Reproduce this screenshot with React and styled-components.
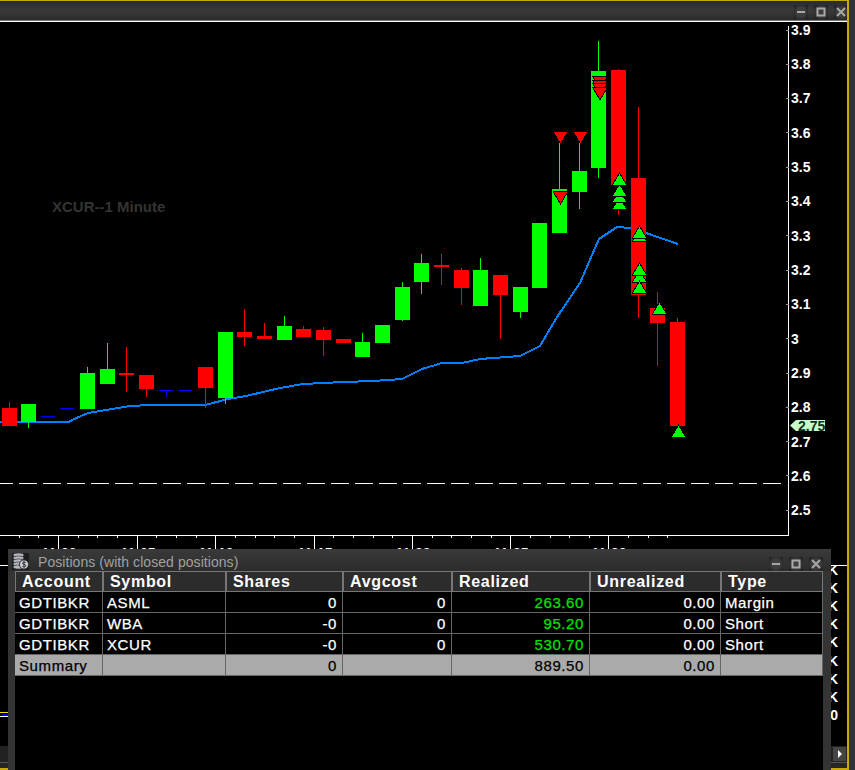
import React from "react";
import styled, { createGlobalStyle } from "styled-components";

// [left, bodyTop, bodyBottom, wickTop, wickBottom, colour]
const R = "#ff0000";
const G = "#00ff00";
const B = "#0000ff";
const candles = [
  [2, 408, 426, 402, 426, R],
  [21, 404, 422, 404, 428, G],
  [41, 416, 417, 416, 417, B],
  [60, 408, 409, 408, 409, B],
  [80, 373, 409, 367, 409, G],
  [100, 369, 384, 343, 384, G],
  [119, 373, 375, 347, 392, R],
  [139, 375, 389, 375, 397, R],
  [159, 390, 391, 390, 397, B],
  [178, 390, 391, 390, 391, B],
  [198, 367, 388, 367, 408, R],
  [218, 332, 398, 332, 404, G],
  [237, 332, 337, 309, 346, R],
  [257, 336, 339, 323, 339, R],
  [277, 326, 340, 316, 340, G],
  [296, 329, 337, 326, 337, R],
  [316, 330, 340, 327, 356, R],
  [336, 339, 343, 339, 343, R],
  [355, 342, 357, 333, 357, G],
  [375, 325, 343, 325, 343, G],
  [395, 287, 320, 282, 321, G],
  [414, 263, 282, 254, 294, G],
  [434, 265, 267, 254, 285, R],
  [454, 270, 288, 268, 305, R],
  [473, 270, 306, 258, 306, G],
  [493, 275, 295, 275, 339, R],
  [513, 287, 312, 287, 318, G],
  [532, 223, 288, 223, 288, G],
  [552, 189, 233, 142, 233, G],
  [572, 171, 192, 143, 209, G],
  [591, 71, 168, 41, 178, G],
  [611, 70, 185, 69, 215, R],
  [631, 178, 295, 107, 318, R],
  [650, 308, 323, 292, 366, R],
  [670, 322, 426, 318, 426, R],
];

const ema =
  "0,422 69,422 72,420 88,413 127,406.5 147,405 205,405 228,399 246,396 280,388 303,384 343,382 373,381 402,379 422,369 442,363 462,363 480,359 520,356 540,346 557,317 580,283 595,248 599,239 617,227 630,228 646,233 678,244";

// [centre x, top y]
const downMarks = [
  [560.5, 132], [580.5, 132], [560.5, 192],
  [600, 77], [600, 81], [600, 84], [600, 88],
];
const upMarks = [
  [619.5, 198], [619.5, 191], [619.5, 185], [619.5, 174],
  [639.5, 230], [639.5, 227],
  [639.5, 271], [639.5, 264], [639.5, 282],
  [659.5, 303],
  [678.5, 426],
];

const prices = ["3.9", "3.8", "3.7", "3.6", "3.5", "3.4", "3.3", "3.2", "3.1", "3", "2.9", "2.8", "2.7", "2.6", "2.5"];
const times = [["11:00", 0], ["11:05", 4], ["11:10", 8], ["11:15", 13], ["11:20", 18], ["11:25", 23], ["11:30", 28]];
const volumes = ["80K", "70K", "60K", "50K", "40K", "30K", "20K", "10K", "0"];

const tickX = (k) => Math.floor(58.5 + 19.66 * k);

const columns = [88, 123, 117, 109, 138, 131, 102];
const heads = ["Account", "Symbol", "Shares", "Avgcost", "Realized", "Unrealized", "Type"];
const rows = [
  ["GDTIBKR", "ASML", "0", "0", "263.60", "0.00", "Margin"],
  ["GDTIBKR", "WBA", "-0", "0", "95.20", "0.00", "Short"],
  ["GDTIBKR", "XCUR", "-0", "0", "530.70", "0.00", "Short"],
];
const summary = ["Summary", "", "0", "", "889.50", "0.00", ""];

function WindowButtons() {
  return (
    <>
      <WinButton>
        <svg width="14" height="14" viewBox="0 0 14 14">
          <rect x="3" y="6" width="8" height="2" fill="#a8a8a8" />
        </svg>
      </WinButton>
      <WinButton>
        <svg width="14" height="14" viewBox="0 0 14 14">
          <rect x="3.5" y="3.5" width="7" height="7" fill="none" stroke="#a8a8a8" strokeWidth="2" />
        </svg>
      </WinButton>
      <WinButton>
        <svg width="14" height="14" viewBox="0 0 14 14">
          <path d="M3 3l8 8M11 3l-8 8" stroke="#a8a8a8" strokeWidth="2" />
        </svg>
      </WinButton>
    </>
  );
}

function CoinsIcon() {
  return (
    <svg width="17" height="17" viewBox="0 0 17 17">
      <rect width="17" height="17" fill="#1c1c1c" />
      {[2, 5, 8, 11, 14].map((y) => (
        <ellipse key={y} cx="6.5" cy={y} rx="5.5" ry="2" fill="#b4b8c0" stroke="#3a3a3a" strokeWidth="0.7" />
      ))}
      <circle cx="12" cy="11.5" r="4.6" fill="#c8ccd2" stroke="#2a2a2a" />
      <path d="M13.6 9.6c-1-.8-3-.6-3 .7 0 1.5 3.2.8 3.2 2.4 0 1.2-2.2 1.4-3.4.6M12 8.2v6.6" fill="none" stroke="#222" strokeWidth="0.9" />
    </svg>
  );
}

// the black outline sits outside the fill, it only shows where marks overlap a candle
function Triangle({ cx, top, down }) {
  const a = down ? top : top + 11;
  const b = down ? top + 11 : top;
  return (
    <polygon
      points={`${cx - 6.5},${a} ${cx + 6.5},${a} ${cx},${b}`}
      fill={down ? R : G}
      stroke="#000"
      strokeWidth="2"
      paintOrder="stroke"
      shapeRendering="crispEdges"
    />
  );
}

function Chart() {
  return (
    <ChartSvg viewBox="0 21 847 725" width="847" height="725">
      <rect x="0" y="21" width="847" height="1" fill="#fff" />
      <rect x="0" y="565" width="847" height="1" fill="#fff" />
      <rect x="0" y="712" width="8" height="1" fill="#f0e000" />
      <rect x="2" y="714" width="6" height="2" fill="#0000ff" />
      <rect x="0" y="716" width="8" height="1" fill="#fff" />

      <WatermarkText x="52" y="212">XCUR--1 Minute</WatermarkText>

      <line x1="-5" y1="483.5" x2="782" y2="483.5" stroke="#fff" strokeDasharray="18 6" />

      <polyline points={ema} fill="none" stroke="#0080ff" strokeWidth="2" shapeRendering="crispEdges" />

      <g shapeRendering="crispEdges">
        {candles.map(([left, top, bottom, wickTop, wickBottom, colour]) => (
          <g key={left} fill={colour}>
            <rect x={left + 7} y={wickTop} width="1" height={wickBottom - wickTop} />
            <rect x={left} y={top} width={colour === B ? 14 : 15} height={bottom - top} />
          </g>
        ))}
      </g>

      {downMarks.map(([cx, top], i) => (
        <Triangle key={i} cx={cx} top={top} down />
      ))}
      {upMarks.map(([cx, top], i) => (
        <Triangle key={i} cx={cx} top={top} />
      ))}

      <g shapeRendering="crispEdges" fill="#fff">
        <rect x="0" y="535" width="789" height="1" />
        <rect x="788" y="26" width="1" height="510" />
        {Array.from({ length: 34 }, (_, i) => i - 2).map((k) => (
          <rect
            key={k}
            x={tickX(k)}
            y="535"
            width="1"
            height={times.some((t) => t[1] === k) ? 15 : 3}
          />
        ))}
        {prices.map((p, i) => (
          <rect key={p} x="786" y={Math.round(29.5 + i * 34.3)} width="3" height="1" fill="#999" />
        ))}
      </g>

      {prices.map((p, i) => (
        <AxisText key={p} x="791" y={34.8 + i * 34.32}>{p}</AxisText>
      ))}
      {times.map(([t, k]) => (
        <AxisText key={t} x={tickX(k) + 1} y="558.4" textAnchor="middle">{t}</AxisText>
      ))}
      {volumes.map((v, i) => (
        <AxisText key={v} x="838" y={574.5 + i * 18.2} textAnchor="end">{v}</AxisText>
      ))}

      <polygon points="790,425.5 796,420 825,420 825,431 796,431" fill="#c8ffc8" />
      <TagText x="798" y="430.5">2.75</TagText>
    </ChartSvg>
  );
}

export default function App() {
  return (
    <Screen>
      <GlobalStyle />
      <MainWindow>
        <TitleBar>
          <WindowButtons />
        </TitleBar>
        <Chart />
        <ScrollRow>
          <ScrollButton>
            <svg width="6" height="8" viewBox="0 0 6 8">
              <path d="M1 0l4 4-4 4z" fill="#fff" />
            </svg>
          </ScrollButton>
        </ScrollRow>
        <FootStrip />
      </MainWindow>

      <PositionsWindow>
        <PanelTitle>
          <CoinsIcon />
          <PanelName>Positions (with closed positions)</PanelName>
          <PanelButtons>
            <WindowButtons />
          </PanelButtons>
        </PanelTitle>
        <PanelBody>
          <Table>
            <colgroup>
              {columns.map((w, i) => (
                <col key={i} width={w} />
              ))}
            </colgroup>
            <thead>
              <tr>
                {heads.map((h) => (
                  <HeadCell key={h}>{h}</HeadCell>
                ))}
              </tr>
            </thead>
            <tbody>
              {rows.map((row) => (
                <tr key={row[1]}>
                  {row.map((v, i) => (
                    <Cell key={i} $right={i >= 2 && i <= 5} $profit={i === 4}>
                      {v}
                    </Cell>
                  ))}
                </tr>
              ))}
              <tr>
                {summary.map((v, i) => (
                  <Cell key={i} $right={i >= 2 && i <= 5} $summary>
                    {v}
                  </Cell>
                ))}
              </tr>
            </tbody>
          </Table>
        </PanelBody>
      </PositionsWindow>
    </Screen>
  );
}

const GlobalStyle = createGlobalStyle`
  html, body {
    margin: 0;
    padding: 0;
    background: #333;
    overflow: hidden;
  }
`;

const Screen = styled.div`
  position: relative;
  width: 855px;
  height: 770px;
  overflow: hidden;
  background-color: #333;
  font-family: "Liberation Sans", Arial, sans-serif;
`;

const MainWindow = styled.div`
  display: flex;
  flex-direction: column;
  width: 849px;
  height: 770px;
  box-sizing: border-box;
  border-top: 1px solid #c8a808;
  border-right: 2px solid #c8a808;
  border-bottom: 2px solid #c8a808;
  background-color: #000;
`;

const TitleBar = styled.div`
  display: flex;
  flex: none;
  justify-content: flex-end;
  align-items: flex-end;
  gap: 6px;
  height: 20px;
  box-sizing: border-box;
  padding-bottom: 1px;
  overflow: hidden;
  border-bottom: 1px solid #777;
  background: linear-gradient(#2a2a2a, #3a3a3a 50%, #2a2a2a);

  & > :last-child {
    margin-right: -1px;
  }
`;

const WinButton = styled.div`
  display: flex;
  flex: none;
  width: 14px;
  height: 14px;
  background: radial-gradient(circle, #3e3e3e 45%, #1a1a1a 100%);
`;

const ChartSvg = styled.svg`
  display: block;
  flex: none;
  background-color: #000;
`;

const AxisText = styled.text`
  font-family: "Liberation Sans", Arial, sans-serif;
  font-size: 14px;
  font-weight: 700;
  fill: #fff;
`;

const WatermarkText = styled.text`
  font-family: "Liberation Sans", Arial, sans-serif;
  font-size: 15px;
  font-weight: 700;
  fill: #343434;
`;

const TagText = styled.text`
  font-family: "Liberation Sans", Arial, sans-serif;
  font-size: 14px;
  font-weight: 700;
  fill: #103020;
`;

const ScrollRow = styled.div`
  display: flex;
  flex: none;
  justify-content: flex-end;
  align-items: center;
  height: 16px;
  padding-right: 1px;
  box-sizing: border-box;
  background-color: #222;
`;

const ScrollButton = styled.div`
  display: flex;
  align-items: center;
  justify-content: center;
  width: 13px;
  height: 14px;
  background-color: #444;
`;

const FootStrip = styled.div`
  flex: 1;
  border-top: 1px solid #555;
  background-color: #262626;
`;

const PositionsWindow = styled.div`
  position: absolute;
  left: 8px;
  top: 549px;
  width: 823px;
  bottom: 0;
  display: flex;
  flex-direction: column;
  background-color: #343434;
`;

const PanelTitle = styled.div`
  display: flex;
  flex: none;
  align-items: center;
  height: 22px;
  padding: 3px 8px 0 4px;
  box-sizing: border-box;
  background: linear-gradient(#3a3a3a, #2c2c2c);
`;

const PanelName = styled.div`
  margin-left: 9px;
  font-size: 14px;
  letter-spacing: 0.06px;
  color: #a0a0a0;
  white-space: nowrap;
`;

const PanelButtons = styled.div`
  display: flex;
  gap: 6px;
  margin-left: auto;
  margin-top: 4px;
`;

const PanelBody = styled.div`
  flex: 1;
  margin: 0 8px 0 7px;
  background-color: #000;
`;

const Table = styled.table`
  table-layout: fixed;
  width: 808px;
  border-collapse: separate;
  border-spacing: 0;
`;

const HeadCell = styled.th`
  height: 21px;
  box-sizing: border-box;
  padding: 0 0 0 6px;
  border: 1px solid #777;
  background-color: #2c2c2c;
  color: #fff;
  font-size: 16px;
  font-weight: 700;
  letter-spacing: 0.7px;
  text-align: left;
  white-space: nowrap;
  overflow: hidden;
`;

const Cell = styled.td`
  height: 21px;
  box-sizing: border-box;
  padding: 0 5px 0 4px;
  border-right: 1px solid #666;
  border-bottom: 1px solid #666;
  background-color: ${(p) => (p.$summary ? "#aaa" : "#000")};
  color: ${(p) => (p.$summary ? "#000" : p.$profit ? "#00e000" : "#fff")};
  font-size: 15px;
  letter-spacing: 0.6px;
  -webkit-text-stroke: 0.25px currentColor;
  text-align: ${(p) => (p.$right ? "right" : "left")};
  white-space: nowrap;
  overflow: hidden;
`;
